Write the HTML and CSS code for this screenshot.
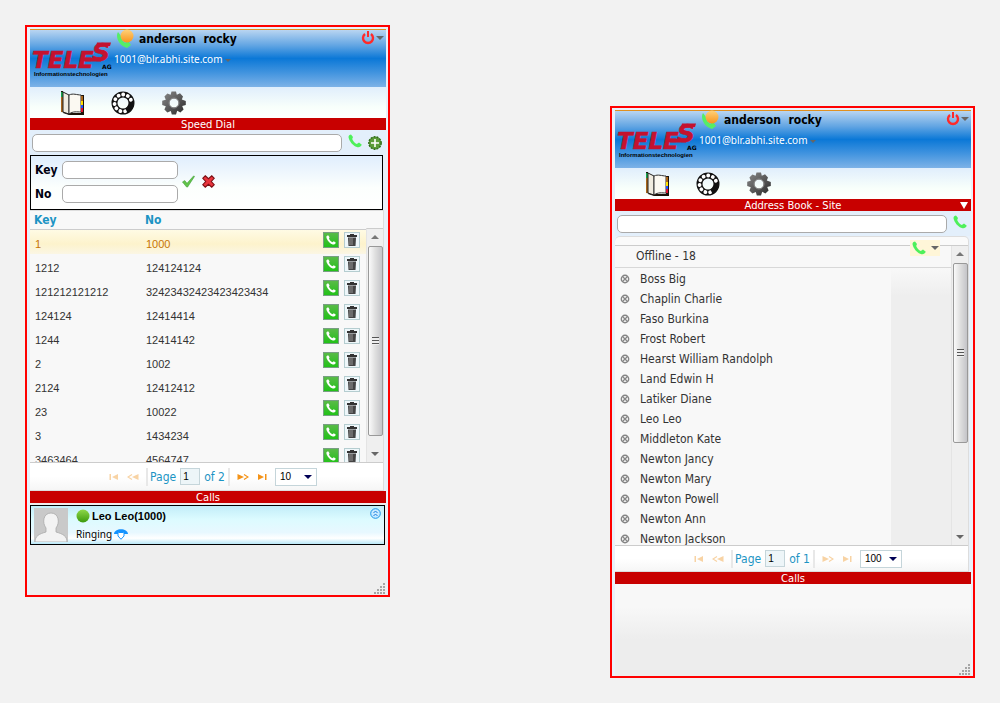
FILE: index.html
```
<!DOCTYPE html>
<html lang="en">
<head>
    <meta charset="UTF-8">
    <meta name="viewport" content="width=device-width, initial-scale=1.0">
    <title>TELES Web Phone</title>
    <link rel="stylesheet" href="styles.css">
</head>
<body>
    <!-- Shared icons -->
    <svg class="icon-defs" aria-hidden="true">
        <defs>
            <linearGradient id="orange" x1="0" y1="0" x2="0" y2="1">
                <stop offset="0" stop-color="#ffd27a"/>
                <stop offset="1" stop-color="#f7941d"/>
            </linearGradient>
            <linearGradient id="green" x1="0" y1="0" x2="0" y2="1">
                <stop offset="0" stop-color="#8fd84a"/>
                <stop offset="1" stop-color="#3c9a0c"/>
            </linearGradient>
            <linearGradient id="metal" x1="0" y1="0" x2="1" y2="1">
                <stop offset="0" stop-color="#8a8a8a"/>
                <stop offset="1" stop-color="#2a2a2a"/>
            </linearGradient>
        </defs>
        <symbol id="phone" viewBox="0 0 14 14">
            <path d="M3 0.5 C0.5 1 0 2.5 1 5 C2.5 9 6 12.5 9.5 13.2 C11.5 13.6 13 12.5 13.8 10.8 L11 8.6 L8.8 10 C6.8 9.2 5 7.2 4.2 5 L5 3 Z" fill="currentColor"/>
        </symbol>
        <symbol id="status" viewBox="0 0 18 20">
            <path d="M2 3 C-1 8 3 17 11 19 L15 16 L12 12 L9 14 C6 12 5 9 5 7 Z" fill="#55ee66"/>
            <circle cx="11" cy="7" r="6.5" fill="url(#orange)"/>
        </symbol>
        <symbol id="power" viewBox="0 0 14 14">
            <path d="M4 3 A5 5 0 1 0 10 3" fill="none" stroke="#ff2a2a" stroke-width="2.4"/>
            <path d="M7 0 V6" stroke="#ff2a2a" stroke-width="2"/>
        </symbol>
        <symbol id="book" viewBox="0 0 24 24">
            <path d="M1 0 H3 V22 L9 24 H24 V4 H21 V22 H10 L1 21 Z" fill="#1c130a"/>
            <path d="M1 4 V21 H3 V3 Z" fill="#a8661c"/>
            <path d="M1 1 H3 V6 H1 Z" fill="#16a34a"/>
            <path d="M3 1 L9 4 V23 L3 21 Z" fill="#f0ece0" stroke="#222"/>
            <path d="M9 4 C13 2 17 4 21 4 V21 C17 21 13 20 9 23 Z" fill="#fbf9f2" stroke="#333"/>
            <path d="M22 5 V10" stroke="#a8661c" stroke-width="2"/>
            <path d="M22 10 V14" stroke="#ffe000" stroke-width="2"/>
            <path d="M22 14 V17" stroke="#2050ff" stroke-width="2"/>
            <path d="M22 17 V21" stroke="#e01030" stroke-width="2"/>
        </symbol>
        <symbol id="dial" viewBox="0 0 24 24">
            <circle cx="12" cy="12" r="8.500" fill="none" stroke="#111" stroke-width="6"/>
            <circle cx="12" cy="12" r="8.500" fill="none" stroke="#fff" stroke-width="3.8" stroke-linecap="round" stroke-dasharray="0.1 4.9" pathLength="55" transform="rotate(75 12 12)"/>
            <path d="M20.5 11 A8.500 8.500 0 0 1 15.500 19.700" fill="none" stroke="#111" stroke-width="5"/>
        </symbol>
        <symbol id="gear" viewBox="0 0 24 24">
            <path d="M9.5 0.5 H14 L14.8 3.8 L18 2.3 L21 5.4 L19.8 8.6 L23.8 10 V14 L20.2 15 L21.6 18.4 L18.4 21.4 L15.2 19.8 L14 23.5 H9.8 L8.8 20 L5.4 21.6 L2.4 18.6 L3.8 15.2 L0.2 14 V9.8 L3.8 8.8 L2.4 5.6 L5.4 2.4 L8.6 3.8 Z M12 7.4 A4.6 4.6 0 1 0 12 16.6 A4.6 4.6 0 1 0 12 7.4 Z" fill="url(#metal)" fill-rule="evenodd"/>
            <circle cx="12" cy="12" r="5" fill="none" stroke="#888"/>
        </symbol>
        <symbol id="plus" viewBox="0 0 14 14">
            <circle cx="7" cy="7" r="6.2" fill="#5c9c3a" stroke="#2f6d18" stroke-width="1.4" stroke-dasharray="2 1"/>
            <path d="M7 3 V11 M3 7 H11" stroke="#fff" stroke-width="1.6"/>
        </symbol>
        <symbol id="tick" viewBox="0 0 14 13">
            <path d="M0.5 7 L3 5.5 L5.4 8.5 L12.5 0.5 L13.5 1 L6 12.5 H5 Z" fill="#62c44a" stroke="#3c9a32" stroke-width="0.6"/>
        </symbol>
        <symbol id="cross" viewBox="0 0 12 12">
            <path d="M3 0.7 L6 3.4 L9 0.7 L11.3 3 L8.6 6 L11.3 9 L9 11.3 L6 8.6 L3 11.3 L0.7 9 L3.4 6 L0.7 3 Z" fill="#e8343c" stroke="#7c1015"/>
        </symbol>
        <symbol id="trash" viewBox="0 0 12 14">
            <path d="M4 1 H8 V2 H11 V4 H1 V2 H4 Z" fill="#333"/>
            <path d="M2 4.5 H10 L9.5 13 H2.5 Z" fill="#444"/>
            <path d="M4 5 V12 M6 5 V12" stroke="#aaa" stroke-width="0.8"/>
        </symbol>
        <symbol id="offline" viewBox="0 0 10 10">
            <circle cx="5" cy="5" r="3.6" fill="#fff" stroke="#858585" stroke-width="1.6"/>
            <path d="M5 2 V8 M2 5 H8" stroke="#fff" stroke-width="1"/>
            <path d="M3 3 L7 7 M7 3 L3 7" stroke="#858585" stroke-width="1.4"/>
        </symbol>
        <symbol id="first" viewBox="0 0 10 6">
            <path d="M0.5 0 H2 V6 H0.5 Z M9 0 V6 L3 3 Z" fill="currentColor"/>
        </symbol>
        <symbol id="prev" viewBox="0 0 12 6">
            <path d="M5 0.5 L1 3 L5 5.5" fill="none" stroke="currentColor" stroke-width="1.2"/>
            <path d="M11.5 0 V6 L5 3 Z" fill="currentColor"/>
        </symbol>
        <symbol id="next" viewBox="0 0 12 6">
            <path d="M7 0.5 L11 3 L7 5.5" fill="none" stroke="currentColor" stroke-width="1.2"/>
            <path d="M0.5 0 V6 L7 3 Z" fill="currentColor"/>
        </symbol>
        <symbol id="last" viewBox="0 0 10 6">
            <path d="M8 0 H9.5 V6 H8 Z M1 0 V6 L7 3 Z" fill="currentColor"/>
        </symbol>
        <symbol id="logo" viewBox="0 0 80 38" overflow="visible">
            <g fill="#c4122f" stroke="#c4122f" stroke-width="0.6">
                <text x="0" y="28" class="logo-name">TELE</text>
                <text x="60" y="21" class="logo-s">S</text>
            </g>
            <path d="M54 18 H71 L69 21.500 H53 Z M65 2.500 H79 L78 6 H64 Z" fill="#c4122f"/>
            <text x="70" y="29" class="logo-ag">AG</text>
            <text x="2" y="36" class="logo-sub">Informationstechnologien</text>
        </symbol>
        <symbol id="grip" viewBox="0 0 12 12">
            <path d="M9 0h2v2h-2z M6 3h2v2h-2z M9 3h2v2h-2z M3 6h2v2h-2z M6 6h2v2h-2z M9 6h2v2h-2z M0 9h2v2h-2z M3 9h2v2h-2z M6 9h2v2h-2z M9 9h2v2h-2z" fill="#a5a5a5"/>
        </symbol>
    </svg>

    <main class="desktop">
        <section class="phone-window" aria-label="Speed dial">
            <header class="profile">
                <svg class="logo" role="img" aria-label="TELES AG"><use href="#logo"/></svg>
                <div class="profile-text">
                    <h1><svg class="status"><use href="#status"/></svg>anderson&nbsp; rocky</h1>
                    <p>1001@blr.abhi.site.com <span class="arrow small"></span></p>
                </div>
                <button class="logout" aria-label="Log out"><svg><use href="#power"/></svg><span class="arrow"></span></button>
            </header>
            <nav class="toolbar">
                <button aria-label="Address book"><svg><use href="#book"/></svg></button>
                <button aria-label="Speed dial"><svg><use href="#dial"/></svg></button>
                <button aria-label="Settings"><svg><use href="#gear"/></svg></button>
            </nav>
            <h2 class="bar">Speed Dial</h2>
            <div class="search">
                <input type="text" aria-label="Number">
                <button class="call" aria-label="Call"><svg><use href="#phone"/></svg></button>
                <button aria-label="Add"><svg><use href="#plus"/></svg></button>
            </div>
            <form class="entry">
                <div class="fields">
                    <label for="key">Key</label><input type="text" id="key">
                    <label for="no">No</label><input type="text" id="no">
                </div>
                <button type="button" aria-label="Save"><svg><use href="#tick"/></svg></button>
                <button type="button" aria-label="Cancel"><svg><use href="#cross"/></svg></button>
            </form>
            <div class="panel">
                <div class="grid">
                    <table>
                        <thead>
                            <tr><th class="col-key">Key</th><th>No</th><th class="col-act"></th></tr>
                        </thead>
                        <tbody>
                            <tr class="selected"><td>1</td><td>1000</td><td class="act"><button class="dial" aria-label="Call"><svg><use href="#phone"/></svg></button><button class="del" aria-label="Delete"><svg><use href="#trash"/></svg></button></td></tr>
                            <tr><td>1212</td><td>124124124</td><td class="act"><button class="dial" aria-label="Call"><svg><use href="#phone"/></svg></button><button class="del" aria-label="Delete"><svg><use href="#trash"/></svg></button></td></tr>
                            <tr><td>121212121212</td><td>32423432423423423434</td><td class="act"><button class="dial" aria-label="Call"><svg><use href="#phone"/></svg></button><button class="del" aria-label="Delete"><svg><use href="#trash"/></svg></button></td></tr>
                            <tr><td>124124</td><td>12414414</td><td class="act"><button class="dial" aria-label="Call"><svg><use href="#phone"/></svg></button><button class="del" aria-label="Delete"><svg><use href="#trash"/></svg></button></td></tr>
                            <tr><td>1244</td><td>12414142</td><td class="act"><button class="dial" aria-label="Call"><svg><use href="#phone"/></svg></button><button class="del" aria-label="Delete"><svg><use href="#trash"/></svg></button></td></tr>
                            <tr><td>2</td><td>1002</td><td class="act"><button class="dial" aria-label="Call"><svg><use href="#phone"/></svg></button><button class="del" aria-label="Delete"><svg><use href="#trash"/></svg></button></td></tr>
                            <tr><td>2124</td><td>12412412</td><td class="act"><button class="dial" aria-label="Call"><svg><use href="#phone"/></svg></button><button class="del" aria-label="Delete"><svg><use href="#trash"/></svg></button></td></tr>
                            <tr><td>23</td><td>10022</td><td class="act"><button class="dial" aria-label="Call"><svg><use href="#phone"/></svg></button><button class="del" aria-label="Delete"><svg><use href="#trash"/></svg></button></td></tr>
                            <tr><td>3</td><td>1434234</td><td class="act"><button class="dial" aria-label="Call"><svg><use href="#phone"/></svg></button><button class="del" aria-label="Delete"><svg><use href="#trash"/></svg></button></td></tr>
                            <tr><td>3463464</td><td>4564747</td><td class="act"><button class="dial" aria-label="Call"><svg><use href="#phone"/></svg></button><button class="del" aria-label="Delete"><svg><use href="#trash"/></svg></button></td></tr>
                        </tbody>
                    </table>
                    <div class="scrollbar">
                        <span class="arrow up"></span>
                        <div class="thumb"><i></i></div>
                        <span class="arrow"></span>
                    </div>
                </div>
                <div class="pager">
                    <button disabled aria-label="First page"><svg><use href="#first"/></svg></button>
                    <button disabled aria-label="Previous page"><svg><use href="#prev"/></svg></button>
                    <div class="page-no"><label for="page1">Page</label><input type="text" id="page1" value="1"><span>of 2</span></div>
                    <button aria-label="Next page"><svg><use href="#next"/></svg></button>
                    <button aria-label="Last page"><svg><use href="#last"/></svg></button>
                    <div class="size"><select aria-label="Rows per page"><option>10</option></select></div>
                </div>
            </div>
            <h2 class="bar">Calls</h2>
            <div class="calls plain">
                <article class="call-card">
                    <svg class="avatar" viewBox="0 0 34 34">
                        <path d="M0 0 H34 V34 H0 Z" fill="#c9c9c9"/>
                        <path d="M1 34 C1 28 5 26 12 24 V20 C8 15 9 5 17 5 C25 5 26 15 22 20 V24 C29 26 33 28 33 34 Z" fill="#f3f3f3" stroke="#aaa" stroke-width="0.8"/>
                    </svg>
                    <div class="call-text">
                        <h3><svg class="dot" viewBox="0 0 14 14"><circle cx="7" cy="7" r="6.5" fill="url(#green)"/></svg>Leo Leo(1000)</h3>
                        <p>Ringing <svg class="ring" viewBox="0 0 14 11"><path d="M0 5 C0 -1.500 14 -1.500 14 5 H10 L9 3.500 H5 L4 5 Z" fill="#1493ff"/><path d="M4 4.500 V7 L7 10.3 L10 7 V4.500 L9 3.500 H5 Z" fill="#fff" stroke="#1493ff"/></svg></p>
                    </div>
                    <button class="collapse" aria-label="Collapse"><svg viewBox="0 0 11 11"><circle cx="5.500" cy="5.500" r="4.800" fill="#c8eaff" stroke="#1a94e8"/><path d="M3.500 5 L5.500 3 L7.500 5 M3.500 8 L5.500 6 L7.500 8" fill="none" stroke="#1a7fe0"/></svg></button>
                </article>
                <svg class="grip"><use href="#grip"/></svg>
            </div>
        </section>

        <section class="phone-window lower" aria-label="Address book">
            <header class="profile">
                <svg class="logo" role="img" aria-label="TELES AG"><use href="#logo"/></svg>
                <div class="profile-text">
                    <h1><svg class="status"><use href="#status"/></svg>anderson&nbsp; rocky</h1>
                    <p>1001@blr.abhi.site.com <span class="arrow small"></span></p>
                </div>
                <button class="logout" aria-label="Log out"><svg><use href="#power"/></svg><span class="arrow"></span></button>
            </header>
            <nav class="toolbar">
                <button aria-label="Address book"><svg><use href="#book"/></svg></button>
                <button aria-label="Speed dial"><svg><use href="#dial"/></svg></button>
                <button aria-label="Settings"><svg><use href="#gear"/></svg></button>
            </nav>
            <h2 class="bar">Address Book - Site<button class="bar-menu" aria-label="Choose book"></button></h2>
            <div class="search">
                <input type="text" aria-label="Search">
                <button class="call" aria-label="Call"><svg><use href="#phone"/></svg></button>
            </div>
            <div class="panel rounded">
                <div class="book">
                    <div class="contacts">
                        <h3 class="group">Offline - 18</h3>
                        <ul>
                            <li><svg><use href="#offline"/></svg>Boss Big</li>
                            <li><svg><use href="#offline"/></svg>Chaplin Charlie</li>
                            <li><svg><use href="#offline"/></svg>Faso Burkina</li>
                            <li><svg><use href="#offline"/></svg>Frost Robert</li>
                            <li><svg><use href="#offline"/></svg>Hearst William Randolph</li>
                            <li><svg><use href="#offline"/></svg>Land Edwin H</li>
                            <li><svg><use href="#offline"/></svg>Latiker Diane</li>
                            <li><svg><use href="#offline"/></svg>Leo Leo</li>
                            <li><svg><use href="#offline"/></svg>Middleton Kate</li>
                            <li><svg><use href="#offline"/></svg>Newton Jancy</li>
                            <li><svg><use href="#offline"/></svg>Newton Mary</li>
                            <li><svg><use href="#offline"/></svg>Newton Powell</li>
                            <li><svg><use href="#offline"/></svg>Newton Ann</li>
                            <li><svg><use href="#offline"/></svg>Newton Jackson</li>
                        </ul>
                    </div>
                    <button class="call quick" aria-label="Call options"><svg><use href="#phone"/></svg><span class="arrow"></span></button>
                    <div class="scrollbar">
                        <span class="arrow up"></span>
                        <div class="thumb"><i></i></div>
                        <span class="arrow"></span>
                    </div>
                </div>
                <div class="pager">
                    <button disabled aria-label="First page"><svg><use href="#first"/></svg></button>
                    <button disabled aria-label="Previous page"><svg><use href="#prev"/></svg></button>
                    <div class="page-no"><label for="page2">Page</label><input type="text" id="page2" value="1"><span>of 1</span></div>
                    <button disabled aria-label="Next page"><svg><use href="#next"/></svg></button>
                    <button disabled aria-label="Last page"><svg><use href="#last"/></svg></button>
                    <div class="size"><select aria-label="Rows per page"><option>100</option></select></div>
                </div>
            </div>
            <h2 class="bar">Calls</h2>
            <div class="calls">
                <svg class="grip"><use href="#grip"/></svg>
            </div>
        </section>
    </main>
</body>
</html>
```
FILE: styles.css
```
* {
    box-sizing: border-box;
}

body {
    margin: 0;
    background: #f2f2f2;
    font-family: "Liberation Sans", Arial, sans-serif;
    font-size: 12px;
    color: #333;
}

h1, h2, h3, p, ul {
    margin: 0;
    padding: 0;
    font-weight: normal;
}

button {
    display: flex;
    align-items: center;
    justify-content: center;
    padding: 0;
    border: 0;
    background: none;
    color: inherit;
    cursor: pointer;
}

svg {
    display: block;
    flex: none;
}

.icon-defs {
    position: absolute;
    width: 0;
    height: 0;
}

.desktop {
    display: flex;
    justify-content: space-between;
    align-items: flex-start;
    padding: 25px;
}

.phone-window {
    display: flex;
    flex-direction: column;
    width: 36.5vw;
    min-width: 340px;
    min-height: 572px;
    padding: 2px 2px 0 3px;
    border: 2px solid #f00;
    background: #e9f1fa;
}

.lower {
    margin-top: 81px;
}

/* Small triangles used for menus and scrollbars */
.arrow {
    display: inline-block;
    border: 4px solid transparent;
    border-top-color: #666;
    border-bottom: 0;
}

.arrow.small {
    border-width: 3px;
    border-bottom: 0;
    vertical-align: middle;
}

.arrow.up {
    border-top: 0;
    border-bottom: 4px solid #777;
}

/* Profile header */
.profile {
    display: flex;
    height: 58px;
    border-top: 1px solid #e09020;
    background: linear-gradient(#b9d5f1 0%, #62a5e3 27%, #0b78d7 50%, #4294df 75%, #7db2e7 100%);
}

.logo {
    width: 80px;
    height: 38px;
    margin: 10px 0 0 2px;
    overflow: visible;
}

.logo-name {
    font: italic bold 23px "DejaVu Sans", sans-serif;
}

.logo-s {
    font: italic bold 25px "DejaVu Sans", sans-serif;
}

.logo-ag {
    font: bold 6px "DejaVu Sans", sans-serif;
}

.logo-sub {
    font: bold 6px "Liberation Sans", sans-serif;
}

.profile-text {
    flex: 1;
    padding-left: 2px;
}

.profile h1 {
    display: flex;
    align-items: center;
    gap: 5px;
    height: 18px;
    padding-left: 2px;
    font: bold 12px "DejaVu Sans Condensed", "DejaVu Sans", sans-serif;
    color: #000;
}

.status {
    width: 18px;
    height: 20px;
}

.profile p {
    font: 10px/22px "Noto Sans", sans-serif;
    color: #fff;
}

.logout {
    gap: 1px;
    height: 16px;
    margin: 0 2px;
}

.logout svg {
    width: 14px;
    height: 14px;
}

.toolbar {
    display: flex;
    gap: 27px;
    height: 31px;
    padding: 0 30px;
    background: linear-gradient(#e0eefc, #f8fffb 65%, #fff);
}

.toolbar svg {
    width: 24px;
    height: 24px;
}

.bar {
    position: relative;
    height: 12px;
    background: #c80000;
    font: 10px/13px "DejaVu Sans", sans-serif;
    color: #fff;
    text-align: center;
}

.bar-menu {
    position: absolute;
    top: 3px;
    right: 3px;
    border: 4px solid transparent;
    border-top: 7px solid #fff;
    border-bottom: 0;
}

/* Search and entry form */
.search {
    display: flex;
    align-items: center;
    gap: 6px;
    height: 25px;
    padding: 0 4px 0 2px;
    background: #e3effb;
}

.search input {
    flex: 1;
    min-width: 0;
    height: 18px;
}

.search input, .entry input {
    padding: 0 4px;
    border: 1px solid #aaa;
    border-radius: 5px;
    background: #fff;
}

.search svg {
    width: 14px;
    height: 14px;
}

.search .call {
    align-self: flex-start;
    margin-top: 4px;
}

.call {
    color: #4ef05a;
}

.entry {
    display: flex;
    align-items: center;
    gap: 7px;
    height: 55px;
    margin-right: 3px;
    padding: 0 4px 2px;
    border: 1px solid #000;
    background: linear-gradient(#e0eefd, #fcfffd 60%, #fff);
}

.fields {
    display: grid;
    grid-template-columns: 27px 116px;
    align-items: center;
    row-gap: 6px;
    margin-right: -3px;
}

.fields label {
    font: bold 12px/18px "DejaVu Sans Condensed", "DejaVu Sans", sans-serif;
    color: #001;
}

.fields input {
    width: 116px;
    height: 18px;
}

.entry svg {
    width: 13px;
    height: 13px;
}

/* Speed dial list */
.panel {
    margin-right: 2px;
    border: 1px solid #ddd;
    border-width: 1px 1px 1px 0;
    background: #f8f8f8;
}

.grid {
    display: flex;
    height: 252px;
    overflow: hidden;
    border-bottom: 1px solid #ccc;
}

.grid table {
    flex: 1;
    align-self: flex-start;
    table-layout: fixed;
    border-collapse: collapse;
}

.grid th {
    height: 18px;
    padding: 2px 0 0 4px;
    border-bottom: 1px solid #ccc;
    font: bold 12px/15px "DejaVu Sans Condensed", "DejaVu Sans", sans-serif;
    color: #1c94c4;
    text-align: left;
}

.col-key {
    width: 111px;
}

.col-act {
    width: 43px;
}

.grid tr {
    height: 24px;
}

.grid thead tr {
    height: 18px;
}

.grid td {
    padding: 4px 0 0 5px;
    font-size: 11px;
}

.grid td.act {
    display: flex;
    gap: 5px;
    height: 24px;
    padding: 2px 0 0;
}

.selected {
    background: linear-gradient(#fffbe6, #fdf3cc 60%, #fbf6e4);
    color: #c77405;
}

.dial, .del {
    width: 16px;
    height: 16px;
    border: 1px solid #b5cdd0;
}

.dial {
    background: linear-gradient(#59ba48, #22c218);
    border-color: #789f83;
    color: #fff;
}

.del {
    background: #eef7fa;
}

.dial svg {
    width: 10px;
    height: 10px;
}

.del svg {
    width: 12px;
    height: 14px;
}

.scrollbar {
    display: flex;
    flex-direction: column;
    align-items: center;
    flex: none;
    width: 17px;
    padding: 6px 0;
    border-left: 1px solid #e4e4e4;
    background: #efefef;
}

.grid .scrollbar {
    margin-top: 17px;
    border-top: 1px solid #ccc;
}

.thumb {
    display: flex;
    align-items: center;
    justify-content: center;
    width: 15px;
    height: 190px;
    margin: 7px 0 auto;
    border: 1px solid #999;
    border-radius: 2px;
    background: linear-gradient(90deg, #fafafa, #dedede 50%, #c4c4c8);
}

.thumb i {
    width: 7px;
    height: 8px;
    background: repeating-linear-gradient(#555 0 1px, #eee 1px 3px);
}

/* Pager */
.pager {
    display: flex;
    align-items: center;
    justify-content: center;
    gap: 7px;
    height: 27px;
    padding-left: 12px;
    background: linear-gradient(#fff 0 50%, #f6f6f6);
    color: #f49318;
}

.pager button svg {
    width: 12px;
    height: 6px;
}

.pager button:disabled {
    color: #f8d3a4;
}

.page-no {
    display: flex;
    align-items: center;
    gap: 4px;
    padding: 0 3px 0 2px;
    border: 2px solid #e8e8e8;
    border-width: 0 2px;
    font: 12px/18px "DejaVu Sans Condensed", "DejaVu Sans", sans-serif;
    color: #1c94c4;
}

.page-no input {
    width: 20px;
    height: 17px;
    padding: 0 2px;
    border: 1px solid #c5d5da;
    background: #edf5f8;
    font: 10px "Liberation Sans", sans-serif;
}

.size {
    position: relative;
}

.size select {
    appearance: none;
    width: 42px;
    height: 18px;
    padding: 0 4px;
    border: 1px solid #c5d5da;
    background: #fff;
    font: 10px "Liberation Sans", sans-serif;
    color: #000;
}

.size::after {
    content: "";
    position: absolute;
    top: 7px;
    right: 5px;
    border: 4px solid transparent;
    border-top-color: #005;
    border-bottom: 0;
    pointer-events: none;
}

/* Address book */
.rounded {
    border-radius: 5px 5px 0 0;
    padding-top: 8px;
    background: #fafafa;
}

.book {
    position: relative;
    display: flex;
    height: 301px;
    border: 1px solid #ccc;
    border-width: 1px 0;
}

.rounded .pager {
    height: 25px;
}

.contacts {
    flex: 1;
    overflow: hidden;
    background: #f8f8f8;
}

.group {
    height: 22px;
    padding-left: 21px;
    border-bottom: 1px solid #d8d8d8;
    font: 12px/20px "DejaVu Sans Condensed", "DejaVu Sans", sans-serif;
}

.contacts ul {
    height: 278px;
    padding-top: 1px;
    list-style: none;
    background: linear-gradient(#f8f8f8, #eee 10%) right / 60px 100% no-repeat;
}

.contacts li {
    display: flex;
    align-items: center;
    gap: 10px;
    height: 20px;
    padding-left: 5px;
    font: 12px/20px "DejaVu Sans Condensed", "DejaVu Sans", sans-serif;
}

.contacts li svg {
    width: 10px;
    height: 10px;
}

.quick {
    position: absolute;
    top: -6px;
    right: 28px;
    gap: 5px;
    width: 30px;
    height: 16px;
    background: #fff6d8;
}

.quick svg {
    width: 14px;
    height: 14px;
}

.book .thumb {
    height: 180px;
}

/* Calls */
.calls {
    display: flex;
    flex-direction: column;
    flex: 1;
    background: linear-gradient(#f8f8f8 25%, #ededed 60%);
}

.calls.plain {
    padding-top: 2px;
    background: #eee;
}

.call-card {
    display: flex;
    height: 40px;
    margin-right: 1px;
    padding: 2px 3px;
    border: 1px solid #000;
    background: linear-gradient(#c2edf8, #dcfbff 35%, #e8f8ff 70%, #fff 85%, #b9e8f8);
}

.avatar {
    width: 34px;
    height: 34px;
}

.call-text {
    flex: 1;
    padding-left: 8px;
    color: #000;
}

.call-card h3 {
    display: flex;
    align-items: center;
    gap: 2px;
    font: bold 11px/16px "Liberation Sans", sans-serif;
}

.dot {
    width: 14px;
    height: 14px;
}

.call-card p {
    display: flex;
    align-items: center;
    gap: 2px;
    font: 10px/20px "Noto Sans", sans-serif;
}

.ring {
    width: 14px;
    height: 11px;
}

.collapse {
    align-self: flex-start;
    width: 11px;
    height: 11px;
}

.collapse svg {
    width: 11px;
    height: 11px;
}

.grip {
    width: 12px;
    height: 12px;
    margin: auto 0 0 auto;
}
```
